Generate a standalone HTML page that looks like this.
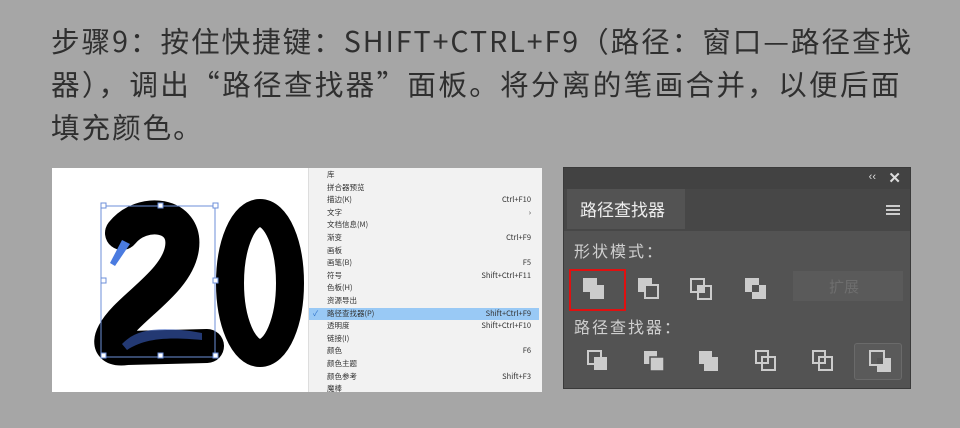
<!DOCTYPE html>
<html><head><meta charset="utf-8"><style>
*{margin:0;padding:0;box-sizing:border-box}
body{width:960px;height:428px;background:#a6a6a6;position:relative;overflow:hidden;font-family:"Liberation Sans","Noto Sans CJK SC",sans-serif}
.t{position:absolute;left:51px;color:#2f2f2f;font-size:28.6px;white-space:nowrap;letter-spacing:1.95px;font-family:"Noto Sans CJK SC",sans-serif}
.img{position:absolute;left:52px;top:168px;width:490px;height:224px;background:#fff;overflow:hidden}
.menu{position:absolute;left:256px;top:0;width:234px;height:224px;background:#f2f2f2;border-left:1px solid #ddd;font-size:7.5px;color:#333;font-family:"Noto Sans CJK SC",sans-serif}
.r{position:absolute;left:0;width:230px;height:12.6px;line-height:12.6px;padding-left:18px}
.r span{position:absolute;right:8px}
.sel{background:#99c9f5}
.panel{position:absolute;left:563px;top:167px;width:348px;height:222px;background:#535353;border:1px solid #3a3a3a}
.top{height:21px;background:#424242}
.tab{position:absolute;left:3px;top:21px;width:118px;height:40px;background:#535353;color:#eee;font-size:17px;line-height:40px;padding-left:13px;font-family:"Noto Sans CJK SC",sans-serif}
.tabbar{position:absolute;left:0;top:21px;width:346px;height:42px;background:#474747}
.lbl{position:absolute;left:10px;color:#cfcfcf;font-size:16px;letter-spacing:2px;font-family:"Noto Sans CJK SC",sans-serif}
.ic{position:absolute}
</style></head><body>
<div class="t" style="top:20px">步骤9：按住快捷键：SHIFT+CTRL+F9（路径：窗口—路径查找</div>
<div class="t" style="top:63px;letter-spacing:2.3px">器），调出“路径查找器”面板。将分离的笔画合并，以便后面</div>
<div class="t" style="top:106px">填充颜色。</div>

<div class="img">
<svg width="256" height="224" style="position:absolute;left:0;top:0">
<path d="M70 65 C90 40 135 45 130 80 C125 115 75 140 62 165 C55 178 62 182 75 180 L155 178" fill="none" stroke="#000" stroke-width="34" stroke-linecap="round"/>
<ellipse cx="208" cy="115" rx="30" ry="70" fill="none" stroke="#000" stroke-width="28"/>
<rect x="49" y="38" width="114" height="151" fill="none" stroke="#6c8fd8" stroke-width="1"/>
<g fill="#fff" stroke="#6c8fd8" stroke-width="1">
<rect x="49" y="35" width="5" height="5"/><rect x="106" y="35" width="5" height="5"/><rect x="161" y="35" width="5" height="5"/>
<rect x="49" y="110" width="5" height="5"/><rect x="161" y="110" width="5" height="5"/>
<rect x="49" y="185" width="5" height="5"/><rect x="106" y="185" width="5" height="5"/><rect x="161" y="185" width="5" height="5"/></g>
<path d="M58 95 L70 72 L78 76 L63 98Z" fill="#4a7be0"/>
<path d="M70 176 C85 160 110 158 150 165 L150 172 C110 168 90 172 75 182Z" fill="#3a5fc0" opacity="0.6"/>
</svg>
<div class="menu">
<div class="r" style="top:1px">库</div>
<div class="r" style="top:13.6px">拼合器预览</div>
<div class="r" style="top:26.2px">描边(K)<span>Ctrl+F10</span></div>
<div class="r" style="top:38.8px">文字<span>›</span></div>
<div class="r" style="top:51.4px">文档信息(M)</div>
<div class="r" style="top:64px">渐变<span>Ctrl+F9</span></div>
<div class="r" style="top:76.6px">画板</div>
<div class="r" style="top:89.2px">画笔(B)<span>F5</span></div>
<div class="r" style="top:101.8px">符号<span>Shift+Ctrl+F11</span></div>
<div class="r" style="top:114.4px">色板(H)</div>
<div class="r" style="top:127px">资源导出</div>
<div class="r sel" style="top:139.6px"><b style="position:absolute;left:4px;color:#2a6fc9;font-weight:normal">✓</b>路径查找器(P)<span>Shift+Ctrl+F9</span></div>
<div class="r" style="top:152.2px">透明度<span>Shift+Ctrl+F10</span></div>
<div class="r" style="top:164.8px">链接(I)</div>
<div class="r" style="top:177.4px">颜色<span>F6</span></div>
<div class="r" style="top:190px">颜色主题</div>
<div class="r" style="top:202.6px">颜色参考<span>Shift+F3</span></div>
<div class="r" style="top:215.2px">魔棒</div>
</div>
</div>

<div class="panel">
<div class="top"></div>
<div style="position:absolute;right:34px;top:3px;color:#ddd;font-size:11px">‹‹</div>
<div style="position:absolute;right:9px;top:1px;color:#ddd;font-size:15px;font-weight:bold">✕</div>
<div class="tabbar"></div>
<div class="tab">路径查找器</div>
<div style="position:absolute;right:10px;top:37px;width:14px;height:10px;border-top:2px solid #ccc;border-bottom:2px solid #ccc"><div style="margin-top:2px;border-top:2px solid #ccc"></div></div>
<div class="lbl" style="top:70px">形状模式：</div>
<div style="position:absolute;left:5px;top:101px;width:57px;height:42px;border:2px solid #e01010"></div>
<svg class="ic" style="left:0;top:100px" width="348" height="118" fill="#ccc">
<rect x="19" y="10" width="14" height="14"/><rect x="26" y="17" width="14" height="14"/>
<rect x="74" y="10" width="14" height="14"/><rect x="81" y="17" width="13" height="13" fill="#535353" stroke="#ccc" stroke-width="2"/>
<rect x="127" y="11" width="13" height="13" fill="none" stroke="#ccc" stroke-width="2"/><rect x="134" y="18" width="13" height="13" fill="none" stroke="#ccc" stroke-width="2"/><rect x="134" y="18" width="6" height="6"/>
<rect x="181" y="10" width="14" height="14"/><rect x="188" y="17" width="14" height="14"/><rect x="188" y="17" width="7" height="7" fill="#535353"/>
<rect x="229" y="3" width="110" height="30" fill="#5a5a5a"/>
</svg>
<div style="position:absolute;left:265px;top:108px;color:#6e6e6e;font-size:15px;font-family:'Noto Sans CJK SC',sans-serif">扩展</div>
<div class="lbl" style="top:146px">路径查找器：</div>
<div style="position:absolute;left:290px;top:175px;width:48px;height:37px;border:1px solid #6a6a6a;border-radius:3px;background:#5a5a5a"></div>
<svg class="ic" style="left:0;top:175px" width="348" height="40" fill="#ccc">
<rect x="24" y="8" width="13" height="13" fill="none" stroke="#ccc" stroke-width="2"/><rect x="30" y="14" width="13" height="13"/>
<rect x="80" y="8" width="13" height="13"/><rect x="86" y="14" width="14" height="14" stroke="#535353" stroke-width="1.5"/>
<rect x="135" y="8" width="13" height="13"/><rect x="140" y="14" width="14" height="14"/>
<rect x="192" y="8" width="12" height="12" fill="none" stroke="#ccc" stroke-width="2"/><rect x="198" y="14" width="13" height="13" fill="none" stroke="#ccc" stroke-width="2"/>
<rect x="249" y="8" width="12" height="12" fill="none" stroke="#ccc" stroke-width="2"/><rect x="255" y="14" width="13" height="13" fill="none" stroke="#ccc" stroke-width="2"/><rect x="255" y="14" width="6" height="6" fill="none" stroke="#ccc" stroke-width="1.5"/>
<rect x="306" y="8" width="14" height="14" fill="none" stroke="#ccc" stroke-width="2"/><rect x="313" y="15" width="14" height="14"/><rect x="313" y="15" width="6" height="6" fill="#535353"/>
</svg>
</div>
</body></html>
